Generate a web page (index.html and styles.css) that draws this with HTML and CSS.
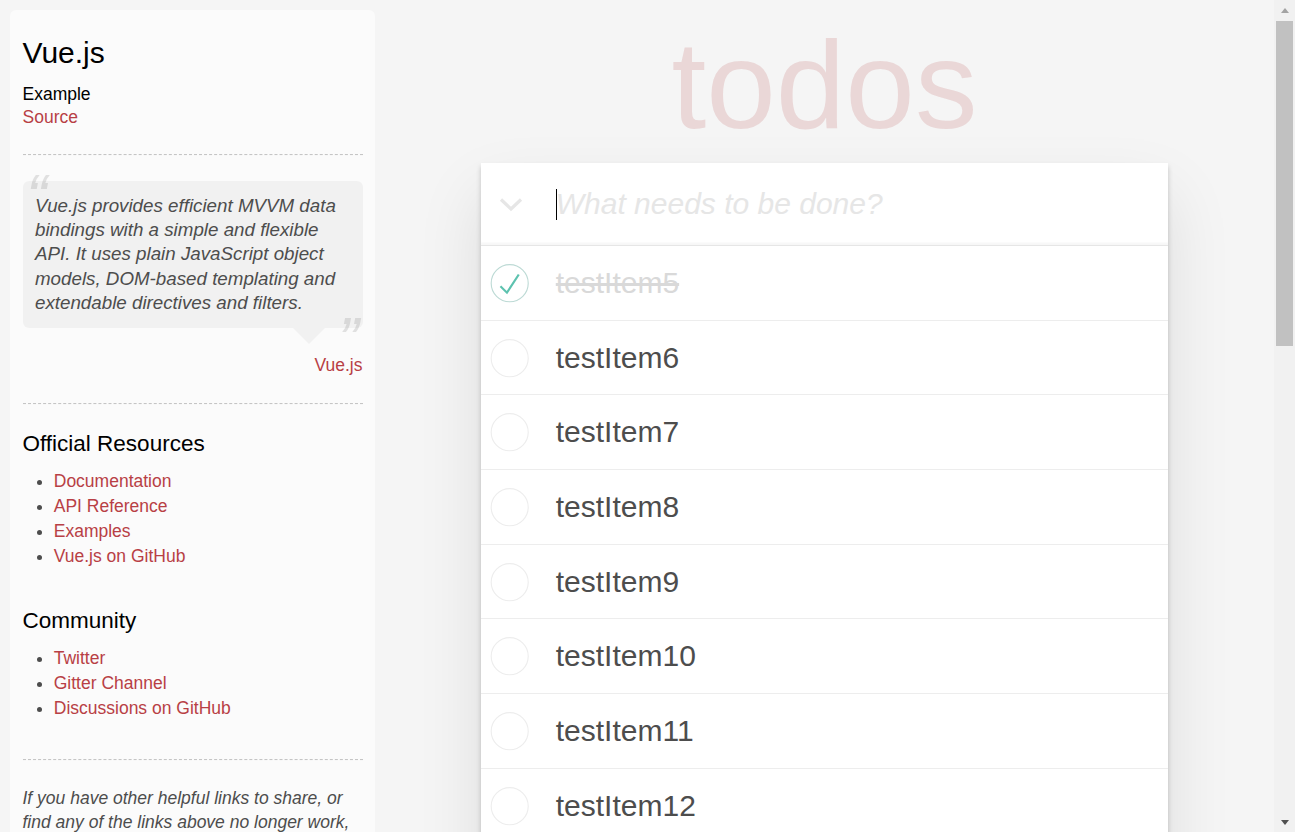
FILE: index.html
```html
<!DOCTYPE html>
<html lang="en">
<head>
<meta charset="utf-8">
<title>Vue.js • TodoMVC</title>
<link rel="stylesheet" href="styles.css">
</head>
<body>
<aside class="learn">
  <header>
    <h3>Vue.js</h3>
    <span class="source-links">
      <h5>Example</h5>
      <a href="#">Source</a>
    </span>
  </header>
  <hr>
  <blockquote class="quote">
    <div class="speech-bubble">
      <p>Vue.js provides efficient MVVM data bindings with a simple and flexible API. It uses plain JavaScript object models, DOM-based templating and extendable directives and filters.</p>
    </div>
    <footer><a href="#">Vue.js</a></footer>
  </blockquote>
  <hr>
  <h4>Official Resources</h4>
  <ul>
    <li><a href="#">Documentation</a></li>
    <li><a href="#">API Reference</a></li>
    <li><a href="#">Examples</a></li>
    <li><a href="#">Vue.js on GitHub</a></li>
  </ul>
  <h4>Community</h4>
  <ul>
    <li><a href="#">Twitter</a></li>
    <li><a href="#">Gitter Channel</a></li>
    <li><a href="#">Discussions on GitHub</a></li>
  </ul>
  <footer class="learn-footer">
    <hr>
    <em>If you have other helpful links to share, or find any of the links above no longer work, please <a href="#">let us know</a>.</em>
  </footer>
</aside>

<main class="app-col">
  <h1 class="title">todos</h1>
  <section class="todoapp">
    <header class="app-header">
      <span class="toggle-all">
        <svg width="24" height="16" viewBox="0 0 24 16"><polyline points="2,2.5 12,12 22,2.5" fill="none" stroke="#e6e6e6" stroke-width="3.2"/></svg>
      </span>
      <span class="caret"></span>
      <input class="new-todo" autocomplete="off" placeholder="What needs to be done?">
    </header>
    <ul class="todo-list">
      <li class="todo completed">
        <svg class="toggle" width="50" height="50" viewBox="-10 -18 100 135"><circle cx="50" cy="50" r="50" fill="none" stroke="#bddad5" stroke-width="3"/><path fill="#5dc2af" d="M72 25L42 71 27 56l-4 4 20 20 34-52z"/></svg>
        <label>testItem5</label>
      </li>
      <li class="todo"><svg class="toggle" width="50" height="50" viewBox="-10 -18 100 135"><circle cx="50" cy="50" r="50" fill="none" stroke="#ededed" stroke-width="3"/></svg><label>testItem6</label></li>
      <li class="todo"><svg class="toggle" width="50" height="50" viewBox="-10 -18 100 135"><circle cx="50" cy="50" r="50" fill="none" stroke="#ededed" stroke-width="3"/></svg><label>testItem7</label></li>
      <li class="todo"><svg class="toggle" width="50" height="50" viewBox="-10 -18 100 135"><circle cx="50" cy="50" r="50" fill="none" stroke="#ededed" stroke-width="3"/></svg><label>testItem8</label></li>
      <li class="todo"><svg class="toggle" width="50" height="50" viewBox="-10 -18 100 135"><circle cx="50" cy="50" r="50" fill="none" stroke="#ededed" stroke-width="3"/></svg><label>testItem9</label></li>
      <li class="todo"><svg class="toggle" width="50" height="50" viewBox="-10 -18 100 135"><circle cx="50" cy="50" r="50" fill="none" stroke="#ededed" stroke-width="3"/></svg><label>testItem10</label></li>
      <li class="todo"><svg class="toggle" width="50" height="50" viewBox="-10 -18 100 135"><circle cx="50" cy="50" r="50" fill="none" stroke="#ededed" stroke-width="3"/></svg><label>testItem11</label></li>
      <li class="todo"><svg class="toggle" width="50" height="50" viewBox="-10 -18 100 135"><circle cx="50" cy="50" r="50" fill="none" stroke="#ededed" stroke-width="3"/></svg><label>testItem12</label></li>
      <li class="todo"><svg class="toggle" width="50" height="50" viewBox="-10 -18 100 135"><circle cx="50" cy="50" r="50" fill="none" stroke="#ededed" stroke-width="3"/></svg><label>testItem13</label></li>
      <li class="todo"><svg class="toggle" width="50" height="50" viewBox="-10 -18 100 135"><circle cx="50" cy="50" r="50" fill="none" stroke="#ededed" stroke-width="3"/></svg><label>testItem14</label></li>
      <li class="todo"><svg class="toggle" width="50" height="50" viewBox="-10 -18 100 135"><circle cx="50" cy="50" r="50" fill="none" stroke="#ededed" stroke-width="3"/></svg><label>testItem15</label></li>
      <li class="todo"><svg class="toggle" width="50" height="50" viewBox="-10 -18 100 135"><circle cx="50" cy="50" r="50" fill="none" stroke="#ededed" stroke-width="3"/></svg><label>testItem16</label></li>
      <li class="todo"><svg class="toggle" width="50" height="50" viewBox="-10 -18 100 135"><circle cx="50" cy="50" r="50" fill="none" stroke="#ededed" stroke-width="3"/></svg><label>testItem17</label></li>
      <li class="todo"><svg class="toggle" width="50" height="50" viewBox="-10 -18 100 135"><circle cx="50" cy="50" r="50" fill="none" stroke="#ededed" stroke-width="3"/></svg><label>testItem18</label></li>
      <li class="todo"><svg class="toggle" width="50" height="50" viewBox="-10 -18 100 135"><circle cx="50" cy="50" r="50" fill="none" stroke="#ededed" stroke-width="3"/></svg><label>testItem19</label></li>
      <li class="todo"><svg class="toggle" width="50" height="50" viewBox="-10 -18 100 135"><circle cx="50" cy="50" r="50" fill="none" stroke="#ededed" stroke-width="3"/></svg><label>testItem20</label></li>
      <li class="todo"><svg class="toggle" width="50" height="50" viewBox="-10 -18 100 135"><circle cx="50" cy="50" r="50" fill="none" stroke="#ededed" stroke-width="3"/></svg><label>testItem21</label></li>
      <li class="todo"><svg class="toggle" width="50" height="50" viewBox="-10 -18 100 135"><circle cx="50" cy="50" r="50" fill="none" stroke="#ededed" stroke-width="3"/></svg><label>testItem22</label></li>
      <li class="todo"><svg class="toggle" width="50" height="50" viewBox="-10 -18 100 135"><circle cx="50" cy="50" r="50" fill="none" stroke="#ededed" stroke-width="3"/></svg><label>testItem23</label></li>
      <li class="todo"><svg class="toggle" width="50" height="50" viewBox="-10 -18 100 135"><circle cx="50" cy="50" r="50" fill="none" stroke="#ededed" stroke-width="3"/></svg><label>testItem24</label></li>
      <li class="todo"><svg class="toggle" width="50" height="50" viewBox="-10 -18 100 135"><circle cx="50" cy="50" r="50" fill="none" stroke="#ededed" stroke-width="3"/></svg><label>testItem25</label></li>
    </ul>
    <footer class="app-footer">
      <span class="todo-count"><strong>20</strong> items left</span>
      <ul class="filters">
        <li><a href="#" class="selected">All</a></li>
        <li><a href="#">Active</a></li>
        <li><a href="#">Completed</a></li>
      </ul>
      <button class="clear-completed">Clear completed</button>
    </footer>
  </section>
  <footer class="info">
    <p>Double-click to edit a todo</p>
    <p>Written by <a href="#">Evan You</a></p>
    <p>Part of <a href="#">TodoMVC</a></p>
  </footer>
</main>

<div class="scrollbar" aria-hidden="true">
  <div class="sb-btn"><span class="arrow-up"></span></div>
  <div class="sb-thumb"></div>
  <div class="sb-track"></div>
  <div class="sb-btn"><span class="arrow-down"></span></div>
</div>
</body>
</html>
```

FILE: styles.css
```css
html {
  background: #f5f5f5;
}

body {
  margin: 0;
  display: flex;
  font-family: "Liberation Sans", Arial, Helvetica, sans-serif;
  font-size: 17.5px;
  line-height: 24.5px;
  color: #4d4d4d;
  font-weight: 300;
  background: #f5f5f5;
}

a {
  color: #b83f45;
  text-decoration: none;
  font-weight: normal;
}

/* ---------- scrollbar column ---------- */
.scrollbar {
  flex: none;
  align-self: flex-start;
  position: sticky;
  top: 0;
  width: 21px;
  height: 100vh;
  background: #f1f1f1;
  display: flex;
  flex-direction: column;
}
.sb-btn {
  flex: none;
  height: 21px;
  display: flex;
  align-items: center;
  justify-content: center;
}
.arrow-up {
  width: 0;
  height: 0;
  border-left: 4.5px solid transparent;
  border-right: 4.5px solid transparent;
  border-bottom: 5px solid #a3a3a3;
  margin-bottom: 1px;
}
.arrow-down {
  width: 0;
  height: 0;
  border-left: 4.5px solid transparent;
  border-right: 4.5px solid transparent;
  border-top: 5px solid #505050;
  margin-top: 2px;
}
.sb-thumb {
  flex: none;
  height: 325px;
  margin: 0 2px;
  background: #c1c1c1;
}
.sb-track {
  flex: 1;
}

/* ---------- sidebar ---------- */
.learn {
  flex: none;
  width: 340px;
  margin: 10px 0 0 10px;
  padding: 12.5px;
  background: rgba(255, 255, 255, 0.6);
  border-radius: 6px;
}

.learn h3,
.learn h4,
.learn h5 {
  margin: 12.5px 0;
  line-height: 1.2;
  color: #000;
  font-weight: normal;
}
.learn h3 {
  font-size: 30px;
}
.learn h4 {
  font-size: 22.5px;
}
.learn h5 {
  margin-bottom: 0;
  font-size: 17.5px;
}
.source-links {
  display: block;
}

.learn hr {
  margin: 25px 0;
  border: 0;
  border-top: 1px dashed #c5c5c5;
  border-bottom: 1px dashed #f7f7f7;
}

.quote {
  margin: 25px 0 0;
}
.speech-bubble {
  position: relative;
  padding: 12.5px;
  background: rgba(0, 0, 0, 0.04);
  border-radius: 6px;
}
.speech-bubble::after {
  content: "";
  position: absolute;
  top: 100%;
  right: 37.5px;
  border: 16.25px solid transparent;
  border-top-color: rgba(0, 0, 0, 0.04);
}
.speech-bubble p {
  margin: 0;
  font-size: 18.75px;
  line-height: 1.3;
  font-style: italic;
}
.speech-bubble p::before {
  content: "\201C";
  font-size: 62.5px;
  opacity: 0.15;
  position: absolute;
  top: -25px;
  left: 3.75px;
}
.speech-bubble p::after {
  content: "\201D";
  font-size: 62.5px;
  opacity: 0.15;
  position: absolute;
  bottom: -52.5px;
  right: 3.75px;
}
.quote footer {
  margin-top: 25.5px;
  text-align: right;
}

.learn ul {
  padding: 0;
  margin: 0 0 37.5px 31.25px;
}
.learn li {
  line-height: 25px;
}

.learn-footer em {
  display: block;
}

/* ---------- todo app ---------- */
.app-col {
  flex: none;
  width: 687.5px;
  margin: 0 auto;
}

.title {
  margin: 22px 0 16px;
  height: 125px;
  font-size: 125px;
  line-height: 125px;
  font-weight: 100;
  text-align: center;
  color: rgba(175, 47, 47, 0.15);
}

.todoapp {
  background: #fff;
  box-shadow: 0 2.5px 5px 0 rgba(0, 0, 0, 0.2), 0 31px 62px 0 rgba(0, 0, 0, 0.1);
}

.app-header {
  display: flex;
  align-items: center;
  box-shadow: inset 0 -2.5px 1px rgba(0, 0, 0, 0.03);
}
.toggle-all {
  flex: none;
  width: 75px;
  height: 82px;
  display: flex;
  align-items: center;
}
.toggle-all svg {
  margin-left: 18.5px;
  margin-top: 1px;
}
.caret {
  flex: none;
  width: 1px;
  height: 31px;
  margin-right: -1px;
  background: #000;
}

.new-todo {
  flex: 1;
  min-width: 0;
  margin: 0;
  height: 82px;
  box-sizing: border-box;
  padding: 20px 20px 20px 0;
  border: none;
  outline: none;
  background: transparent;
  font-family: inherit;
  font-size: 30px;
  line-height: 42px;
  color: inherit;
}
.new-todo::placeholder {
  font-style: italic;
  font-weight: 300;
  color: #e6e6e6;
}

.todo-list {
  margin: 0;
  padding: 0;
  list-style: none;
  border-top: 1px solid #e6e6e6;
}
.todo {
  display: flex;
  align-items: center;
  border-bottom: 1px solid #ededed;
  font-size: 30px;
}
.toggle {
  flex: none;
  display: block;
}
.todo label {
  flex: 1;
  padding: 18.85px 18.75px 18.85px 25px;
  line-height: 36px;
  color: #4d4d4d;
  word-break: break-all;
}
.todo.completed label {
  color: #d9d9d9;
  text-decoration: line-through;
}

.app-footer {
  display: flex;
  align-items: center;
  justify-content: space-between;
  height: 25px;
  padding: 12.5px 18.75px;
  border-top: 1px solid #e6e6e6;
  color: #777;
  font-size: 17.5px;
}
.filters {
  display: flex;
  gap: 4px;
  margin: 0;
  padding: 0;
  list-style: none;
}
.filters a {
  color: inherit;
  padding: 4px 9px;
  border: 1px solid transparent;
  border-radius: 4px;
}
.filters a.selected {
  border-color: rgba(175, 47, 47, 0.2);
}
.clear-completed {
  border: 0;
  background: none;
  font: inherit;
  color: inherit;
  padding: 0;
}

.info {
  margin: 81px 0 0;
  color: #bfbfbf;
  font-size: 12.5px;
  text-shadow: 0 1px 0 rgba(255, 255, 255, 0.5);
  text-align: center;
}
.info p {
  line-height: 1;
  margin: 12.5px 0;
}
.info a {
  color: inherit;
}
```
